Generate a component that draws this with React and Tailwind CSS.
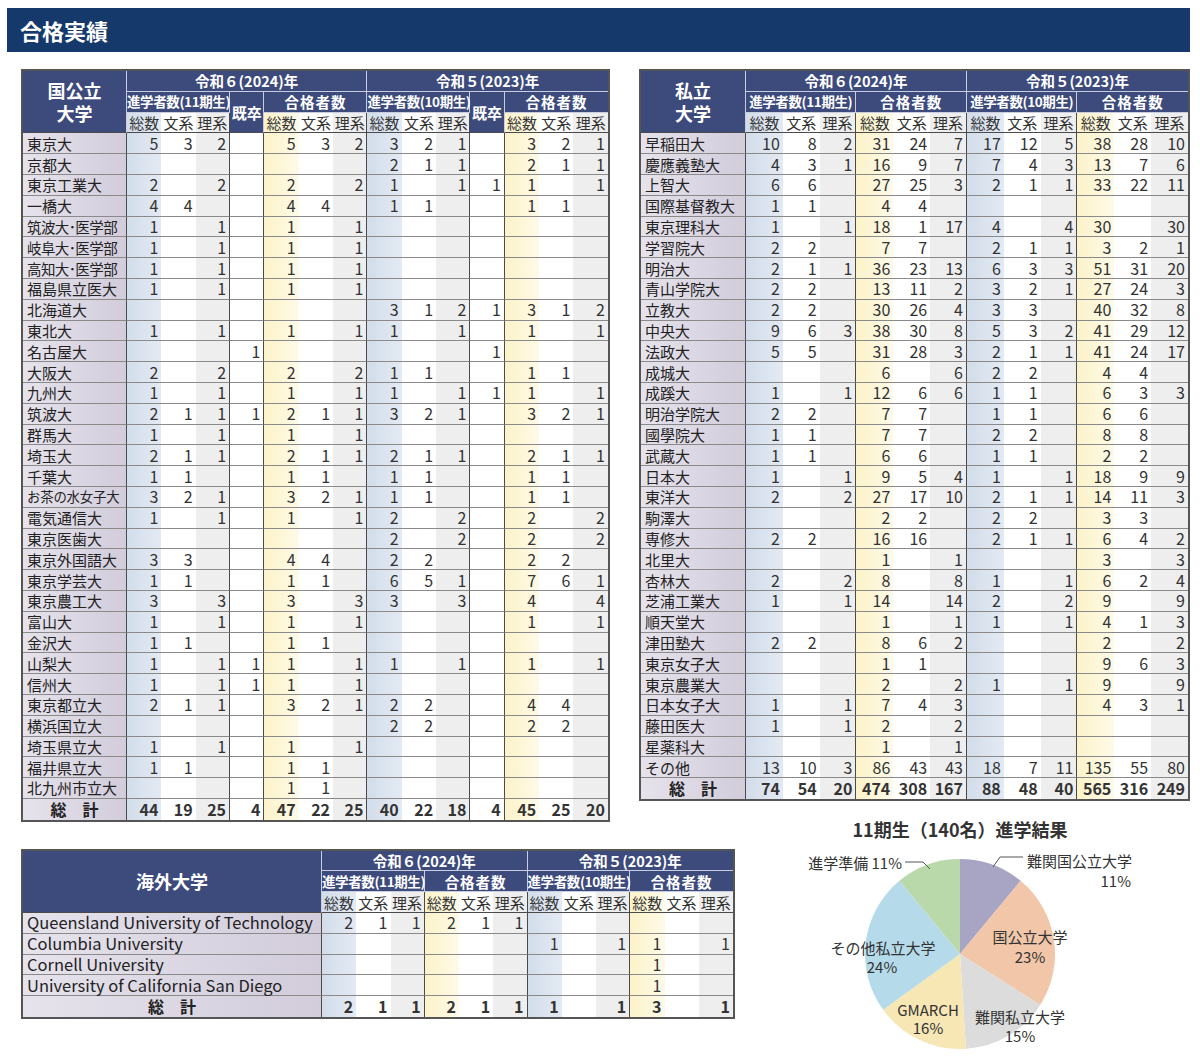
import React from 'react';

const FONT = "font-['Noto_Sans_CJK_JP','Noto_Sans',sans-serif]";
const NAVY = 'bg-[#3d4a7c]';
const COL = {
  B: 'bg-linear-to-r from-[#d2ddea] to-[#e4eaf3]',
  W: 'bg-white',
  G: 'bg-[#eeeeee]',
  Y: 'bg-linear-to-r from-[#fcf3c9] to-[#fefae8]',
};
const NAMEBG = 'bg-linear-to-r from-[#e6e3ec] to-[#d2ccdb]';

function ResultTable({ width, nameW, nameHeader, years, rows, total, nameCls }) {
  const cols = [];
  const ends = new Set();
  years.forEach((y) =>
    y.groups.forEach((g) => {
      if (g.kisotsu) cols.push({ color: 'W', kisotsu: true });
      else
        ['総数', '文系', '理系'].forEach((s, si) =>
          cols.push({ color: si === 0 ? g.first : si === 1 ? 'W' : 'G', sub: s })
        );
      ends.add(cols.length - 1);
    })
  );
  const last = cols.length - 1;
  const rowH = 'h-[20.8px]';
  return (
    <table
      className={`border-separate border-spacing-0 table-fixed border-2 border-[#555] leading-[19px] ${width}`}
    >
      <colgroup>
        <col className={nameW} />
        {cols.map((c, i) => (
          <col key={i} />
        ))}
      </colgroup>
      <thead>
        <tr className={rowH}>
          <th
            rowSpan={3}
            className={`${NAVY} text-white font-bold text-[18px] leading-[23px] p-0 border-r border-r-[#c9cde0] border-b border-b-[#4a4a4a]`}
          >
            {nameHeader}
          </th>
          {years.map((y, yi) => (
            <th
              key={yi}
              colSpan={y.span}
              className={`${NAVY} text-white font-bold text-[14.5px] p-0 whitespace-nowrap border-b border-b-[#c9cde0] ${
                yi < years.length - 1 ? 'border-r border-r-[#c9cde0]' : ''
              }`}
            >
              {y.label}
            </th>
          ))}
        </tr>
        <tr className={rowH}>
          {years.flatMap((y, yi) =>
            y.groups.map((g, gi) => {
              const isLast = yi === years.length - 1 && gi === y.groups.length - 1;
              return g.kisotsu ? (
                <th
                  key={yi + '-' + gi}
                  rowSpan={2}
                  className={`${NAVY} text-white font-bold text-[15px] p-0 whitespace-nowrap border-b border-b-[#4a4a4a] ${
                    !isLast ? 'border-r border-r-[#c9cde0]' : ''
                  }`}
                >
                  既卒
                </th>
              ) : (
                <th
                  key={yi + '-' + gi}
                  colSpan={3}
                  className={`${NAVY} text-white font-bold p-0 whitespace-nowrap border-b border-b-[#c9cde0] ${
                    g.label.length > 5 ? 'text-[13.5px] tracking-[-0.4px]' : 'text-[14.5px] tracking-[1px]'
                  } ${!isLast ? 'border-r border-r-[#c9cde0]' : ''}`}
                >
                  {g.label}
                </th>
              );
            })
          )}
        </tr>
        <tr className={rowH}>
          {cols.map((c, ci) =>
            c.kisotsu ? null : (
              <th
                key={ci}
                className={`${COL[c.color]} font-normal text-[15px] text-[#333] p-0 whitespace-nowrap border-b border-b-[#4a4a4a] ${
                  ends.has(ci) && ci !== last ? 'border-r border-r-[#4a4a4a]' : ''
                }`}
              >
                {c.sub}
              </th>
            )
          )}
        </tr>
      </thead>
      <tbody>
        {rows.map((r, ri) => {
          const v = r[1].split(',');
          return (
            <tr key={ri} className={rowH}>
              <td
                className={`${NAMEBG} p-0 pl-[4px] text-left whitespace-nowrap text-[#222] border-b border-b-[#8a8a8a] border-r border-r-[#4a4a4a] ${
                  r[2] || nameCls
                }`}
              >
                {r[0]}
              </td>
              {cols.map((c, ci) => (
                <td
                  key={ci}
                  className={`${COL[c.color]} p-0 pr-[3px] text-right text-[16px] text-[#333] border-b border-b-[#8a8a8a] ${
                    ends.has(ci) && ci !== last ? 'border-r border-r-[#4a4a4a]' : ''
                  }`}
                >
                  {v[ci] || ''}
                </td>
              ))}
            </tr>
          );
        })}
        <tr className={rowH}>
          <td
            className={`${NAMEBG} p-0 text-center whitespace-nowrap font-bold text-[16px] text-[#222] border-r border-r-[#4a4a4a]`}
          >
            総　計
          </td>
          {cols.map((c, ci) => {
            const v = total.split(',');
            return (
              <td
                key={ci}
                className={`${COL[c.color]} p-0 pr-[3px] text-right text-[16px] font-bold text-[#333] ${
                  ends.has(ci) && ci !== last ? 'border-r border-r-[#4a4a4a]' : ''
                }`}
              >
                {v[ci] || ''}
              </td>
            );
          })}
        </tr>
      </tbody>
    </table>
  );
}

const yearsNat = [
  {
    label: '令和６(2024)年',
    span: 7,
    groups: [
      { label: '進学者数(11期生)', first: 'B' },
      { kisotsu: true },
      { label: '合格者数', first: 'Y' },
    ],
  },
  {
    label: '令和５(2023)年',
    span: 7,
    groups: [
      { label: '進学者数(10期生)', first: 'B' },
      { kisotsu: true },
      { label: '合格者数', first: 'Y' },
    ],
  },
];

const yearsPriv = [
  {
    label: '令和６(2024)年',
    span: 6,
    groups: [
      { label: '進学者数(11期生)', first: 'B' },
      { label: '合格者数', first: 'Y' },
    ],
  },
  {
    label: '令和５(2023)年',
    span: 6,
    groups: [
      { label: '進学者数(10期生)', first: 'B' },
      { label: '合格者数', first: 'Y' },
    ],
  },
];

const MED = 'text-[14.5px] tracking-[-0.6px]';

const natRows = [
  ['東京大', '5,3,2,,5,3,2,3,2,1,,3,2,1'],
  ['京都大', ',,,,,,,2,1,1,,2,1,1'],
  ['東京工業大', '2,,2,,2,,2,1,,1,1,1,,1'],
  ['一橋大', '4,4,,,4,4,,1,1,,,1,1,'],
  ['筑波大･医学部', '1,,1,,1,,1,,,,,,,', MED],
  ['岐阜大･医学部', '1,,1,,1,,1,,,,,,,', MED],
  ['高知大･医学部', '1,,1,,1,,1,,,,,,,', MED],
  ['福島県立医大', '1,,1,,1,,1,,,,,,,'],
  ['北海道大', ',,,,,,,3,1,2,1,3,1,2'],
  ['東北大', '1,,1,,1,,1,1,,1,,1,,1'],
  ['名古屋大', ',,,1,,,,,,,1,,,'],
  ['大阪大', '2,,2,,2,,2,1,1,,,1,1,'],
  ['九州大', '1,,1,,1,,1,1,,1,1,1,,1'],
  ['筑波大', '2,1,1,1,2,1,1,3,2,1,,3,2,1'],
  ['群馬大', '1,,1,,1,,1,,,,,,,'],
  ['埼玉大', '2,1,1,,2,1,1,2,1,1,,2,1,1'],
  ['千葉大', '1,1,,,1,1,,1,1,,,1,1,'],
  ['お茶の水女子大', '3,2,1,,3,2,1,1,1,,,1,1,', 'text-[13.4px] tracking-[-0.2px]'],
  ['電気通信大', '1,,1,,1,,1,2,,2,,2,,2'],
  ['東京医歯大', ',,,,,,,2,,2,,2,,2'],
  ['東京外国語大', '3,3,,,4,4,,2,2,,,2,2,'],
  ['東京学芸大', '1,1,,,1,1,,6,5,1,,7,6,1'],
  ['東京農工大', '3,,3,,3,,3,3,,3,,4,,4'],
  ['富山大', '1,,1,,1,,1,,,,,1,,1'],
  ['金沢大', '1,1,,,1,1,,,,,,,,'],
  ['山梨大', '1,,1,1,1,,1,1,,1,,1,,1'],
  ['信州大', '1,,1,1,1,,1,,,,,,,'],
  ['東京都立大', '2,1,1,,3,2,1,2,2,,,4,4,'],
  ['横浜国立大', ',,,,,,,2,2,,,2,2,'],
  ['埼玉県立大', '1,,1,,1,,1,,,,,,,'],
  ['福井県立大', '1,1,,,1,1,,,,,,,,'],
  ['北九州市立大', ',,,,1,1,,,,,,,,'],
];
const natTotal = '44,19,25,4,47,22,25,40,22,18,4,45,25,20';

const privRows = [
  ['早稲田大', '10,8,2,31,24,7,17,12,5,38,28,10'],
  ['慶應義塾大', '4,3,1,16,9,7,7,4,3,13,7,6'],
  ['上智大', '6,6,,27,25,3,2,1,1,33,22,11'],
  ['国際基督教大', '1,1,,4,4,,,,,,,'],
  ['東京理科大', '1,,1,18,1,17,4,,4,30,,30'],
  ['学習院大', '2,2,,7,7,,2,1,1,3,2,1'],
  ['明治大', '2,1,1,36,23,13,6,3,3,51,31,20'],
  ['青山学院大', '2,2,,13,11,2,3,2,1,27,24,3'],
  ['立教大', '2,2,,30,26,4,3,3,,40,32,8'],
  ['中央大', '9,6,3,38,30,8,5,3,2,41,29,12'],
  ['法政大', '5,5,,31,28,3,2,1,1,41,24,17'],
  ['成城大', ',,,6,,6,2,2,,4,4,'],
  ['成蹊大', '1,,1,12,6,6,1,1,,6,3,3'],
  ['明治学院大', '2,2,,7,7,,1,1,,6,6,'],
  ['國學院大', '1,1,,7,7,,2,2,,8,8,'],
  ['武蔵大', '1,1,,6,6,,1,1,,2,2,'],
  ['日本大', '1,,1,9,5,4,1,,1,18,9,9'],
  ['東洋大', '2,,2,27,17,10,2,1,1,14,11,3'],
  ['駒澤大', ',,,2,2,,2,2,,3,3,'],
  ['専修大', '2,2,,16,16,,2,1,1,6,4,2'],
  ['北里大', ',,,1,,1,,,,3,,3'],
  ['杏林大', '2,,2,8,,8,1,,1,6,2,4'],
  ['芝浦工業大', '1,,1,14,,14,2,,2,9,,9'],
  ['順天堂大', ',,,1,,1,1,,1,4,1,3'],
  ['津田塾大', '2,2,,8,6,2,,,,2,,2'],
  ['東京女子大', ',,,1,1,,,,,9,6,3'],
  ['東京農業大', ',,,2,,2,1,,1,9,,9'],
  ['日本女子大', '1,,1,7,4,3,,,,4,3,1'],
  ['藤田医大', '1,,1,2,,2,,,,,,'],
  ['星薬科大', ',,,1,,1,,,,,,'],
  ['その他', '13,10,3,86,43,43,18,7,11,135,55,80'],
];
const privTotal = '74,54,20,474,308,167,88,48,40,565,316,249';

const abroadRows = [
  ['Queensland University of Technology', '2,1,1,2,1,1,,,,,,'],
  ['Columbia University', ',,,,,,1,,1,1,,1'],
  ['Cornell University', ',,,,,,,,,1,,'],
  ['University of California San Diego', ',,,,,,,,,1,,'],
];
const abroadTotal = '2,1,1,2,1,1,1,,1,3,,1';

function Pie() {
  const cx = 200;
  const cy = 114;
  const r = 95;
  const data = [
    [11, '#a8a5c4'],
    [23, '#f1c6a9'],
    [15, '#dcdcdc'],
    [16, '#f7e7b5'],
    [24, '#b5dbeb'],
    [11, '#bad9aa'],
  ];
  let acc = 0;
  const paths = data.map(([p, c], i) => {
    const a0 = (acc / 100) * 2 * Math.PI;
    acc += p;
    const a1 = (acc / 100) * 2 * Math.PI;
    const x0 = cx + r * Math.sin(a0);
    const y0 = cy - r * Math.cos(a0);
    const x1 = cx + r * Math.sin(a1);
    const y1 = cy - r * Math.cos(a1);
    const large = p > 50 ? 1 : 0;
    return (
      <path
        key={i}
        d={`M${cx},${cy} L${x0.toFixed(2)},${y0.toFixed(2)} A${r},${r} 0 ${large} 1 ${x1.toFixed(2)},${y1.toFixed(2)} Z`}
        fill={c}
      />
    );
  });
  const t = { fontSize: 15, fill: '#333' };
  return (
    <svg width="400" height="216" viewBox="0 0 400 216" className="block">
      {paths}
      <polyline points="233,27 240,17 263,17" fill="none" stroke="#555" strokeWidth="1" />
      <polyline points="145,22 163,22 170,29" fill="none" stroke="#555" strokeWidth="1" />
      <g fontFamily="'Noto Sans CJK JP','Noto Sans',sans-serif" dominantBaseline="central">
        <text x="267" y="20" {...t}>難関国公立大学</text>
        <text x="371" y="40" textAnchor="end" {...t}>11%</text>
        <text x="142" y="22" textAnchor="end" {...t}>進学準備 11%</text>
        <text x="270" y="96" textAnchor="middle" {...t}>国公立大学</text>
        <text x="270" y="116" textAnchor="middle" {...t}>23%</text>
        <text x="260" y="176" textAnchor="middle" {...t}>難関私立大学</text>
        <text x="260" y="195" textAnchor="middle" {...t}>15%</text>
        <text x="168" y="169" textAnchor="middle" {...t}>GMARCH</text>
        <text x="168" y="187" textAnchor="middle" {...t}>16%</text>
        <text x="123" y="107" textAnchor="middle" {...t}>その他私立大学</text>
        <text x="122" y="126" textAnchor="middle" {...t}>24%</text>
      </g>
    </svg>
  );
}

export default function App() {
  return (
    <div className={`${FONT} w-[1200px] bg-white pb-[10px]`}>
      <div className="ml-[7px] mt-[8px] w-[1183px] h-[44px] bg-[#15396b] flex items-center pl-[13px]">
        <h1 className="text-white text-[22px] font-bold leading-none">合格実績</h1>
      </div>
      <div className="flex items-start mt-[17px] ml-[21px]">
        <ResultTable
          width="w-[589px]"
          nameW="w-[104px]"
          nameHeader={
            <>
              国公立
              <br />
              大学
            </>
          }
          years={yearsNat}
          rows={natRows}
          total={natTotal}
          nameCls="text-[15px]"
        />
        <div className="ml-[29px]">
          <ResultTable
            width="w-[551px]"
            nameW="w-[105px]"
            nameHeader={
              <>
                私立
                <br />
                大学
              </>
            }
            years={yearsPriv}
            rows={privRows}
            total={privTotal}
            nameCls="text-[15px]"
          />
        </div>
      </div>
      <div className="flex items-start ml-[21px]">
        <div className="mt-[27px]">
          <ResultTable
            width="w-[714px]"
            nameW="w-[299px]"
            nameHeader="海外大学"
            years={yearsPriv}
            rows={abroadRows}
            total={abroadTotal}
            nameCls="text-[16.5px] pl-[3px]"
          />
        </div>
        <div className="ml-[25px] mt-[-4px] w-[400px]">
          <div className="h-[22px] leading-[22px] text-[18px] font-bold text-center text-[#333]">
            11期生（140名）進学結果
          </div>
          <Pie />
        </div>
      </div>
    </div>
  );
}
